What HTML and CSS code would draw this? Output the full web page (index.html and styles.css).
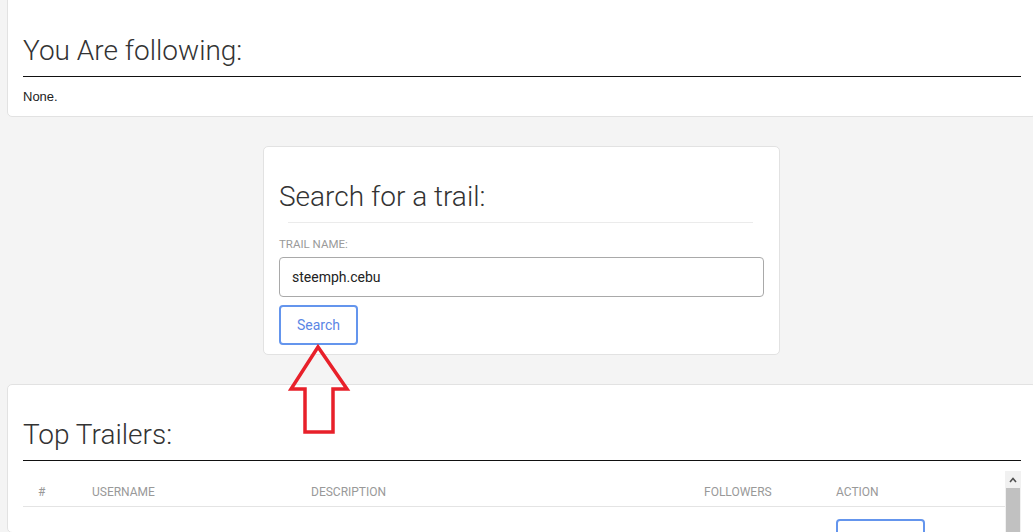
FILE: index.html
```html
<!DOCTYPE html>
<html>
<head>
  <title>Trail</title>
  <link rel="stylesheet" href="styles.css">
</head>
<body>

  <div class="card card-wide card-top">
    <h2 class="title">You Are following:</h2>
    <p class="none">None.</p>
  </div>

  <div class="card search-card">
    <h2 class="search-title">Search for a trail:</h2>
    <hr class="thin">
    <label class="field-label" for="trail">Trail name:</label>
    <input type="text" id="trail" class="field" value="steemph.cebu">
    <button class="btn-outline">Search</button>
  </div>

  <div class="card card-wide">
    <h2 class="title">Top Trailers:</h2>
    <div class="table-box">
      <div class="table-scroll">
        <table class="trailers">
          <thead>
            <tr>
              <th class="c-num">#</th>
              <th class="c-user">Username</th>
              <th class="c-desc">Description</th>
              <th class="c-fol">Followers</th>
              <th class="c-act">Action</th>
            </tr>
          </thead>
          <tbody>
            <tr>
              <td></td>
              <td></td>
              <td></td>
              <td></td>
              <td><button class="btn-outline btn-row"></button></td>
            </tr>
          </tbody>
        </table>
      </div>
      <div class="scrollbar">
        <div class="sb-arrow">
          <svg width="8" height="6" viewBox="0 0 8 6"><path d="M1 5 L4 1.5 L7 5" fill="none" stroke="#505050" stroke-width="1.6"/></svg>
        </div>
        <div class="sb-thumb"></div>
      </div>
    </div>
  </div>

  <svg class="arrow" width="70" height="100" viewBox="0 0 70 100">
    <polygon points="30,4 3,46 17,46 17,89 45,89 45,46 59,46" fill="none" stroke="#e8202a" stroke-width="3.5" stroke-linejoin="miter"/>
  </svg>

</body>
</html>
```

FILE: styles.css
```css
body {
  margin: 0;
  background: #f4f4f4;
  font-family: Roboto, "Liberation Sans", Arial, sans-serif;
  color: #333;
  overflow: hidden;
  position: relative;
  height: 532px;
}

.card {
  background: #fff;
  border: 1px solid #e2e2e2;
  border-radius: 5px;
}

.card-wide {
  margin: 29px -4px 0 7px;
  padding: 32px 15px 0 15px;
}

.card-top {
  margin-top: -6px;
  padding-top: 38px;
  padding-bottom: 10px;
}

.title {
  margin: 0;
  font-size: 28px;
  font-weight: 300;
  line-height: 36px;
  padding-bottom: 7px;
  border-bottom: 1px solid #111;
  color: #333;
}

.none {
  margin: 11px 0 0;
  font-family: "Liberation Sans", Arial, sans-serif;
  font-size: 13px;
  line-height: 18px;
  color: #222;
}

.search-card {
  width: 485px;
  margin: 29px 0 0 263px;
  padding: 15px 15px 9px;
}

.search-title {
  margin: 17px 0 0;
  font-size: 28px;
  font-weight: 300;
  line-height: 36px;
}

.thin {
  border: 0;
  border-top: 1px solid #ebebeb;
  margin: 7px 11px 0 9px;
}

.field-label {
  display: block;
  margin-top: 14px;
  font-size: 11.5px;
  line-height: 14px;
  text-transform: uppercase;
  color: #9a9a9a;
}

.field {
  display: block;
  box-sizing: border-box;
  width: 100%;
  height: 40px;
  margin-top: 6px;
  padding: 0 12px;
  border: 1px solid #a9a9a9;
  border-radius: 4px;
  font-family: Roboto, sans-serif;
  font-size: 14px;
  color: #222;
}

.btn-outline {
  display: block;
  box-sizing: border-box;
  width: 79px;
  height: 40px;
  margin-top: 8px;
  background: #fff;
  border: 2px solid #6495ed;
  border-radius: 4px;
  font-family: Roboto, sans-serif;
  font-size: 14px;
  color: #5b86e5;
}

.table-box {
  display: flex;
  margin-top: 10px;
  height: 61px;
  overflow: hidden;
}

.table-scroll {
  flex: 1;
}

.trailers {
  width: 100%;
  border-collapse: collapse;
}

.trailers th {
  text-align: left;
  font-weight: 400;
  font-size: 12px;
  text-transform: uppercase;
  color: #999;
  padding: 14px 0 7px 15px;
  border-bottom: 1px solid #e4e4e4;
  line-height: 14px;
}

.trailers td {
  padding: 12px 0 0 15px;
  font-size: 13px;
  vertical-align: top;
}

.c-num { width: 39px; }
.c-user { width: 204px; }
.c-desc { width: 378px; }
.c-fol { width: 117px; }

.btn-row {
  width: 89px;
  margin-top: 0;
}

.scrollbar {
  width: 16px;
  background: #f1f1f1;
  display: flex;
  flex-direction: column;
}

.sb-arrow {
  height: 17px;
  display: flex;
  align-items: center;
  justify-content: center;
}

.sb-thumb {
  flex: 1;
  margin: 0 1px;
  background: #c1c1c1;
}

.arrow {
  position: absolute;
  left: 288px;
  top: 343px;
}
```
